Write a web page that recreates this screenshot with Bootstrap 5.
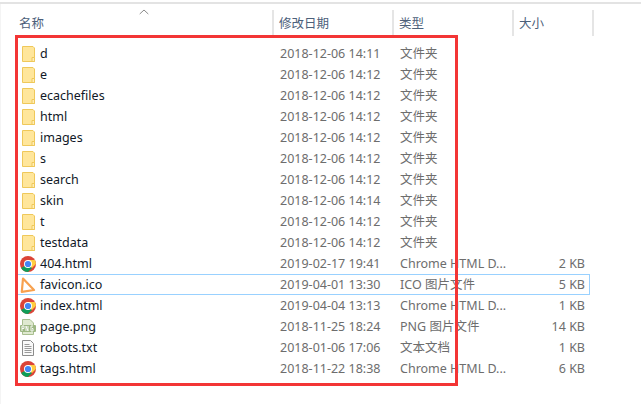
<!DOCTYPE html>
<html lang="zh"><head><meta charset="utf-8">
<link href="https://cdn.jsdelivr.net/npm/bootstrap@5.3.0/dist/css/bootstrap.min.css" rel="stylesheet">
<style>
html,body{margin:0;background:#fff;width:641px;height:404px;overflow:hidden}
.shell{position:relative;width:641px;height:404px;padding-top:2px;font:12.5px/21px "Noto Sans","Noto Sans CJK SC",sans-serif;color:#6d6d6d}
.topline{height:2px;background:#e3e3e3}
.edge{position:absolute;left:0;top:4px;bottom:0;width:1px;background:#f4f4f4}
.hdr{height:26px;margin-top:6px;margin-left:15px;color:#4c607a;font-size:12.5px;line-height:28px}
.hcell{height:26px;border-right:2px solid #e5e5e5;padding-left:4px;flex:none}
.w1{width:259px}.w2{width:120px}.w3{width:120px}.w4{width:80px}
.hcell.w2,.hcell.w3,.hcell.w4{padding-left:5px}
.sort{position:absolute;left:139px;top:9px}
.rows{margin-top:7px;margin-left:15px}
.frow{height:21px;width:575px;border:1px solid transparent;border-width:1px 1px 1px 0}
.frow.hov{border-color:#99d1ff}
.nm{width:265px;padding-left:5px;gap:4px;color:#111827;flex:none}
.nm span{line-height:19px}
.dt{width:120px;flex:none}
.tp{width:120px;flex:none;white-space:nowrap}
.sz{width:65px;text-align:right;flex:none}
.frow>div{height:19px;line-height:19px}
.ico{width:16px;height:16px;flex:none;display:block}
.redbox{position:absolute;left:15px;top:35px;width:443px;height:351px;border:3px solid #f33535;pointer-events:none}
</style></head><body>
<div class="shell">
<div class="topline"></div><div class="edge"></div>
<svg class="sort" width="10" height="6" viewBox="0 0 10 6"><path d="M.7 5 5 1l4.300 4" fill="none" stroke="#8a8a8a"/></svg>
<div class="hdr d-flex">
<div class="hcell w1">名称</div><div class="hcell w2">修改日期</div><div class="hcell w3">类型</div><div class="hcell w4">大小</div>
</div>
<svg width="0" height="0" class="d-block"><defs>
<g id="fo"><path d="M2.500.5h10.500l1.500 1.500v13.500h-12z" fill="#ffe69b" stroke="#efc85a"/><path d="M12 11.500h2.500v4H12z" fill="#ffeeb8" stroke="#efc85a"/></g>
<g id="ch"><circle cx="8" cy="8" r="8" fill="#db4437"/><path d="M8 8 1.100 12A8 8 0 0 0 8 16l4-4z" fill="#0f9d58"/><path d="M8 8l4 4 3.900-4A8 8 0 0 0 14.900 4H8z" fill="#ffcd40"/><circle cx="8" cy="8" r="4" fill="#fff"/><circle cx="8" cy="8" r="3.100" fill="#4285f4"/></g>
</defs></svg>
<div class="rows" id="rows">
<div class="frow d-flex"><div class="nm d-flex align-items-center"><svg class="ico"><use href="#fo"/></svg><span>d</span></div><div class="dt">2018-12-06 14:11</div><div class="tp">文件夹</div><div class="sz"></div></div>
<div class="frow d-flex"><div class="nm d-flex align-items-center"><svg class="ico"><use href="#fo"/></svg><span>e</span></div><div class="dt">2018-12-06 14:12</div><div class="tp">文件夹</div><div class="sz"></div></div>
<div class="frow d-flex"><div class="nm d-flex align-items-center"><svg class="ico"><use href="#fo"/></svg><span>ecachefiles</span></div><div class="dt">2018-12-06 14:12</div><div class="tp">文件夹</div><div class="sz"></div></div>
<div class="frow d-flex"><div class="nm d-flex align-items-center"><svg class="ico"><use href="#fo"/></svg><span>html</span></div><div class="dt">2018-12-06 14:12</div><div class="tp">文件夹</div><div class="sz"></div></div>
<div class="frow d-flex"><div class="nm d-flex align-items-center"><svg class="ico"><use href="#fo"/></svg><span>images</span></div><div class="dt">2018-12-06 14:12</div><div class="tp">文件夹</div><div class="sz"></div></div>
<div class="frow d-flex"><div class="nm d-flex align-items-center"><svg class="ico"><use href="#fo"/></svg><span>s</span></div><div class="dt">2018-12-06 14:12</div><div class="tp">文件夹</div><div class="sz"></div></div>
<div class="frow d-flex"><div class="nm d-flex align-items-center"><svg class="ico"><use href="#fo"/></svg><span>search</span></div><div class="dt">2018-12-06 14:12</div><div class="tp">文件夹</div><div class="sz"></div></div>
<div class="frow d-flex"><div class="nm d-flex align-items-center"><svg class="ico"><use href="#fo"/></svg><span>skin</span></div><div class="dt">2018-12-06 14:14</div><div class="tp">文件夹</div><div class="sz"></div></div>
<div class="frow d-flex"><div class="nm d-flex align-items-center"><svg class="ico"><use href="#fo"/></svg><span>t</span></div><div class="dt">2018-12-06 14:12</div><div class="tp">文件夹</div><div class="sz"></div></div>
<div class="frow d-flex"><div class="nm d-flex align-items-center"><svg class="ico"><use href="#fo"/></svg><span>testdata</span></div><div class="dt">2018-12-06 14:12</div><div class="tp">文件夹</div><div class="sz"></div></div>
<div class="frow d-flex"><div class="nm d-flex align-items-center"><svg class="ico"><use href="#ch"/></svg><span>404.html</span></div><div class="dt">2019-02-17 19:41</div><div class="tp">Chrome HTML D...</div><div class="sz">2 KB</div></div>
<div class="frow hov d-flex"><div class="nm d-flex align-items-center"><svg class="ico" viewBox="0 0 16 16"><path d="M3 1.500 14 13 1.800 14.800z" fill="none" stroke="#f7a14f" stroke-width="2.200" stroke-linejoin="round"/></svg><span>favicon.ico</span></div><div class="dt">2019-04-01 13:30</div><div class="tp">ICO 图片文件</div><div class="sz">5 KB</div></div>
<div class="frow d-flex"><div class="nm d-flex align-items-center"><svg class="ico"><use href="#ch"/></svg><span>index.html</span></div><div class="dt">2019-04-04 13:13</div><div class="tp">Chrome HTML D...</div><div class="sz">1 KB</div></div>
<div class="frow d-flex"><div class="nm d-flex align-items-center"><svg class="ico" viewBox="0 0 16 16"><path d="M2.500.5h7.500l3.500 3.500v11.500h-11z" fill="#dfe9d0" stroke="#a9bf90"/><rect x="0" y="6" width="16" height="7" rx="1" fill="#9db783"/><path d="M2 7v5M2 7h2v2.500H2M6 12V7l2 5V7M13 7h-2v5h2V9.500h-1" fill="none" stroke="#fff" stroke-width=".9"/></svg><span>page.png</span></div><div class="dt">2018-11-25 18:24</div><div class="tp">PNG 图片文件</div><div class="sz">14 KB</div></div>
<div class="frow d-flex"><div class="nm d-flex align-items-center"><svg class="ico" viewBox="0 0 16 16"><path d="M2.500.5h8l3 3v12h-11z" fill="#fafafa" stroke="#8c8c8c"/><path d="M4.500 4.500h5M4.500 6.500h7M4.500 8.500h7M4.500 10.500h7M4.500 12.500h7" stroke="#9a9a9a"/></svg><span>robots.txt</span></div><div class="dt">2018-01-06 17:06</div><div class="tp">文本文档</div><div class="sz">1 KB</div></div>
<div class="frow d-flex"><div class="nm d-flex align-items-center"><svg class="ico"><use href="#ch"/></svg><span>tags.html</span></div><div class="dt">2018-11-22 18:38</div><div class="tp">Chrome HTML D...</div><div class="sz">6 KB</div></div>
</div>
<div class="redbox"></div>
</div>
<script src="https://cdn.jsdelivr.net/npm/bootstrap@5.3.0/dist/js/bootstrap.bundle.min.js"></script>
</body></html>
